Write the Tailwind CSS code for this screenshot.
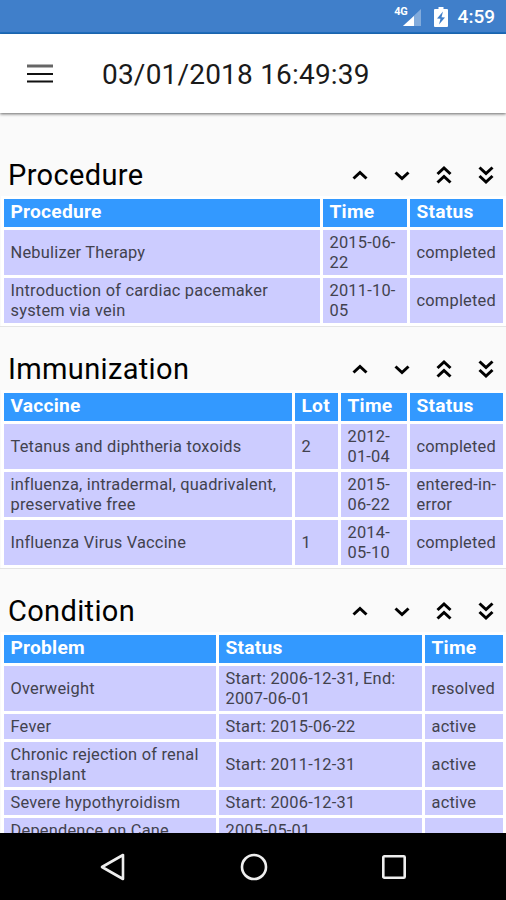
<!DOCTYPE html>
<html lang="en">

<head>
    <meta charset="UTF-8">
    <meta name="viewport" content="width=device-width, initial-scale=1.0">
    <script src="https://cdn.jsdelivr.net/npm/@tailwindcss/browser@4"></script>
    <title>Health Summary</title>
</head>

<body class="font-['Roboto',sans-serif] bg-[#fafafa]">
    <!-- arrow icons shared by the section headers -->
    <svg class="hidden">
        <symbol id="up" viewBox="0 0 24 24"><path d="M5.5 15.5 12 9.5l6.5 6" /></symbol>
        <symbol id="down" viewBox="0 0 24 24"><path d="M5.5 9.5 12 15.5l6.5-6" /></symbol>
        <symbol id="top" viewBox="0 0 24 24"><path d="M5.5 11 12 5l6.5 6M5.5 19.5 12 13.5l6.5 6" /></symbol>
        <symbol id="bottom" viewBox="0 0 24 24"><path d="M5.5 4.5 12 10.5l6.5-6M5.5 13 12 19l6.5-6" /></symbol>
    </svg>

    <div class="w-[506px] h-[900px] overflow-hidden flex flex-col">
        <!-- status bar -->
        <div class="h-[34px] shrink-0 bg-[#407fca] border-b-2 border-[#1f70c1] flex items-center justify-end text-white">
            <span class="text-[11px] font-bold self-start mt-[6px] leading-none tracking-tight">4G</span>
            <svg class="w-5 h-[19px] -ml-[6px] mt-[2px]" viewBox="0 0 20 19">
                <path d="M19 1v17H1z" fill="#fff" fill-opacity=".35" />
                <path d="M12 8v10H1z" fill="#fff" />
            </svg>
            <svg class="w-[14px] h-5 ml-[12px] mt-[2px]" viewBox="0 0 14 20">
                <path d="M4.5 0h5v2H13q1 0 1 1v16q0 1-1 1H1q-1 0-1-1V3q0-1 1-1h3.5z" fill="#fff" />
                <path d="M9 4.5 3 11.5l3.5.3L5 17.5l6-7-3.5-.3z" fill="#407fca" />
            </svg>
            <span class="text-[19px] font-medium ml-[10px] mr-[11px] mt-[3px]">4:59</span>
        </div>

        <!-- toolbar -->
        <header class="h-[79px] shrink-0 bg-white flex items-center shadow-[0_1px_3px_rgba(0,0,0,0.6)] z-10">
            <svg class="w-[26px] h-5 ml-[27px]" viewBox="0 0 26 20">
                <path d="M0 .5h26v3H0z" fill="#666" />
                <path d="M0 9h26v2H0zM0 16.5h26v2H0z" fill="#111" />
            </svg>
            <h1 class="text-[28px] tracking-[0.2px] ml-[49px] mt-[3px] text-[#1a1a1a] whitespace-nowrap">03/01/2018 16:49:39</h1>
        </header>

        <main class="flex-1 overflow-hidden text-[#42424e] text-[16.4px] tracking-[0.22px] leading-5">
            <section class="border-b border-[#e4e4e4]">
                <div class="h-[83px] pt-[41px] pl-2 pr-[8.5px] flex items-center justify-between">
                    <h2 class="text-[29px] tracking-[0.35px] text-black">Procedure</h2>
                    <div class="flex gap-[18px] fill-none stroke-black stroke-[3]">
                        <svg class="size-6"><use href="#up" /></svg>
                        <svg class="size-6"><use href="#down" /></svg>
                        <svg class="size-6"><use href="#top" /></svg>
                        <svg class="size-6"><use href="#bottom" /></svg>
                    </div>
                </div>
                <table class="w-[505px] ml-px table-fixed border-separate border-spacing-[3px] bg-white whitespace-nowrap [&_td]:bg-[#ccccff] [&_td]:pl-[6.5px] [&_td]:py-0 [&_th]:bg-[#3399ff] [&_th]:text-white [&_th]:text-left [&_th]:pl-[6.5px] [&_th]:pb-[2px] [&_th]:h-7 [&_th]:text-[19.2px]">
                    <colgroup><col class="w-[316px]"><col class="w-[84px]"><col class="w-[93px]"></colgroup>
                    <tr><th>Procedure</th><th>Time</th><th>Status</th></tr>
                    <tr class="h-[45px]"><td>Nebulizer Therapy</td><td>2015-06-<br>22</td><td>completed</td></tr>
                    <tr class="h-[45px]"><td>Introduction of cardiac pacemaker<br>system via vein</td><td>2011-10-<br>05</td><td>completed</td></tr>
                </table>
            </section>

            <section class="border-b border-[#e4e4e4]">
                <div class="h-[63px] pt-[21px] pl-2 pr-[8.5px] flex items-center justify-between">
                    <h2 class="text-[29px] tracking-[0.35px] text-black">Immunization</h2>
                    <div class="flex gap-[18px] fill-none stroke-black stroke-[3]">
                        <svg class="size-6"><use href="#up" /></svg>
                        <svg class="size-6"><use href="#down" /></svg>
                        <svg class="size-6"><use href="#top" /></svg>
                        <svg class="size-6"><use href="#bottom" /></svg>
                    </div>
                </div>
                <table class="w-[505px] ml-px table-fixed border-separate border-spacing-[3px] bg-white whitespace-nowrap [&_td]:bg-[#ccccff] [&_td]:pl-[6.5px] [&_td]:py-0 [&_th]:bg-[#3399ff] [&_th]:text-white [&_th]:text-left [&_th]:pl-[6.5px] [&_th]:pb-[2px] [&_th]:h-7 [&_th]:text-[19.2px]">
                    <colgroup><col class="w-[288px]"><col class="w-[43px]"><col class="w-[66px]"><col class="w-[93px]"></colgroup>
                    <tr><th>Vaccine</th><th>Lot</th><th>Time</th><th>Status</th></tr>
                    <tr class="h-[45px]"><td>Tetanus and diphtheria toxoids</td><td>2</td><td>2012-<br>01-04</td><td>completed</td></tr>
                    <tr class="h-[45px]"><td>influenza, intradermal, quadrivalent,<br>preservative free</td><td></td><td>2015-<br>06-22</td><td>entered-in-<br>error</td></tr>
                    <tr class="h-[45px]"><td>Influenza Virus Vaccine</td><td>1</td><td>2014-<br>05-10</td><td>completed</td></tr>
                </table>
            </section>

            <section>
                <div class="h-[63px] pt-[21px] pl-2 pr-[8.5px] flex items-center justify-between">
                    <h2 class="text-[29px] tracking-[0.35px] text-black">Condition</h2>
                    <div class="flex gap-[18px] fill-none stroke-black stroke-[3]">
                        <svg class="size-6"><use href="#up" /></svg>
                        <svg class="size-6"><use href="#down" /></svg>
                        <svg class="size-6"><use href="#top" /></svg>
                        <svg class="size-6"><use href="#bottom" /></svg>
                    </div>
                </div>
                <table class="w-[505px] ml-px table-fixed border-separate border-spacing-[3px] bg-white whitespace-nowrap [&_td]:bg-[#ccccff] [&_td]:pl-[6.5px] [&_td]:py-0 [&_th]:bg-[#3399ff] [&_th]:text-white [&_th]:text-left [&_th]:pl-[6.5px] [&_th]:pb-[2px] [&_th]:h-7 [&_th]:text-[19.2px]">
                    <colgroup><col class="w-[212px]"><col class="w-[203px]"><col class="w-[78px]"></colgroup>
                    <tr><th>Problem</th><th>Status</th><th>Time</th></tr>
                    <tr class="h-[45px]"><td>Overweight</td><td>Start: 2006-12-31, End:<br>2007-06-01</td><td>resolved</td></tr>
                    <tr class="h-[25px]"><td>Fever</td><td>Start: 2015-06-22</td><td>active</td></tr>
                    <tr class="h-[45px]"><td>Chronic rejection of renal<br>transplant</td><td>Start: 2011-12-31</td><td>active</td></tr>
                    <tr class="h-[25px]"><td>Severe hypothyroidism</td><td>Start: 2006-12-31</td><td>active</td></tr>
                    <tr class="h-[25px]"><td>Dependence on Cane</td><td>2005-05-01</td><td></td></tr>
                </table>
            </section>
        </main>

        <!-- android navigation bar -->
        <nav class="h-[67px] shrink-0 bg-black flex items-center justify-center gap-[112.5px] pl-px">
            <svg class="size-7" viewBox="0 0 28 28" fill="none" stroke="#eee" stroke-width="2.6" stroke-linejoin="round"><path d="M24 2v24L3 14z" /></svg>
            <svg class="size-7" viewBox="0 0 28 28" fill="none" stroke="#eee" stroke-width="2.6"><circle cx="14" cy="14" r="12" /></svg>
            <svg class="size-7" viewBox="0 0 28 28" fill="none" stroke="#eee" stroke-width="2.6"><rect x="3.3" y="3.3" width="21.4" height="21.4" rx="1" /></svg>
        </nav>
    </div>
</body>

</html>
